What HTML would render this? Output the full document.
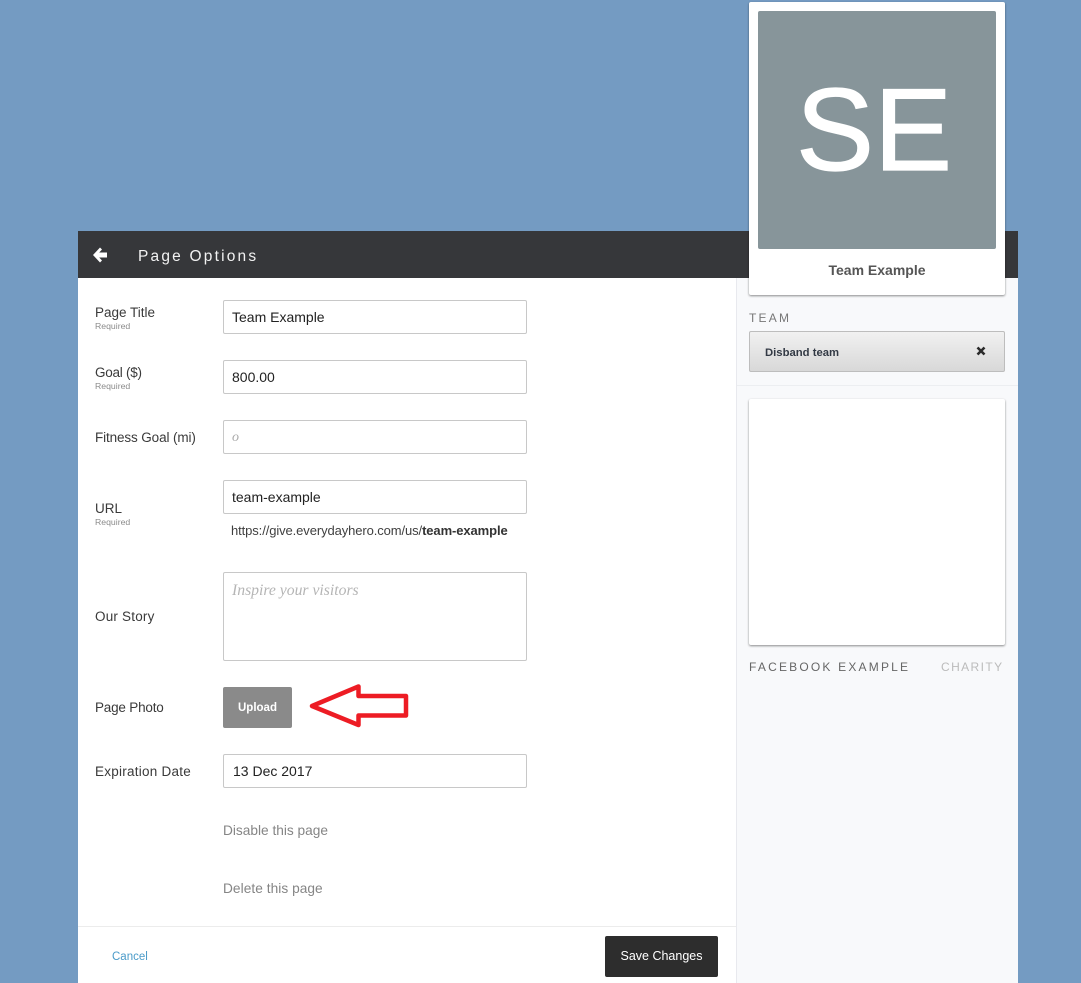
<!DOCTYPE html>
<html><head><meta charset="utf-8"><style>
html,body{margin:0;padding:0;width:1081px;height:983px;overflow:hidden;background:#749bc2;font-family:"Liberation Sans",sans-serif}
.a{position:absolute;white-space:nowrap}
.lb{left:95px;font-size:13.5px;line-height:16px;color:#3a3a3a}
.rq{left:95px;font-size:8.7px;line-height:10px;color:#8b8b8b}
.in{left:223px;width:302px;height:32px;background:#fff;border:1px solid #c8c8c8;border-radius:2px;font-size:14px;line-height:32px;color:#222;text-indent:8px}
.lk{left:223px;font-size:13.7px;line-height:16px;color:#858585}
.sec{font-size:12px;line-height:14px;letter-spacing:2.2px}
</style></head><body>
<div class="a" style="left:78px;top:231px;width:940px;height:752px;background:#fff"></div>
<div class="a" style="left:78px;top:231px;width:940px;height:47px;background:#36373a"></div>
<div class="a" style="left:736px;top:278px;width:281px;height:705px;background:#f8f9fb;border-left:1px solid #e8e9ee"></div>
<svg class="a" style="left:92px;top:247px" width="16" height="16" viewBox="0 0 16 16"><path d="M1 8 8 .5 10 2.500 7.200 5.500H15V10.500H7.200L10 13.500 8 15.500Z" fill="#fff"/></svg>
<div class="a" style="left:138px;top:247px;font-size:15.500px;line-height:19px;letter-spacing:2.200px;color:#f2f2f2">Page Options</div>

<div class="a lb" style="top:305px">Page Title</div><div class="a rq" style="top:321px">Required</div>
<div class="a in" style="top:300px">Team Example</div>
<div class="a lb" style="top:365px;letter-spacing:-.25px">Goal ($)</div><div class="a rq" style="top:381px">Required</div>
<div class="a in" style="top:360px">800.00</div>
<div class="a lb" style="top:430px;letter-spacing:-.12px">Fitness Goal (mi)</div>
<div class="a in" style="top:420px;color:#aaa;font-family:'Liberation Serif',serif;font-style:italic;line-height:34px">o</div>
<div class="a lb" style="top:501px">URL</div><div class="a rq" style="top:517px">Required</div>
<div class="a in" style="top:480px">team-example</div>
<div class="a" style="left:231px;top:523px;font-size:13px;line-height:16px;color:#3f3f3f;letter-spacing:-.1px">https://give.everydayhero.com/us/<b style="color:#333">team-example</b></div>

<div class="a lb" style="top:609px;letter-spacing:.2px">Our Story</div>
<div class="a" style="left:223px;top:572px;width:302px;height:87px;background:#fff;border:1px solid #c8c8c8;border-radius:2px"></div>
<div class="a" style="left:232px;top:582px;font-family:'Liberation Serif',serif;font-style:italic;font-size:15.700px;line-height:18px;color:#b5b5b5">Inspire your visitors</div>

<div class="a lb" style="top:700px;letter-spacing:-.2px">Page Photo</div>
<div class="a" style="left:223px;top:687px;width:69px;height:41px;background:#8a8a8a;border-radius:2px;color:#fff;font-size:11.500px;font-weight:bold;line-height:43px;text-align:center">Upload</div>
<svg class="a" style="left:300px;top:680px" width="115" height="52" viewBox="300 680 115 52"><path d="M312 706 358.500 686.500V696H406V715.500H358.500V725Z" fill="none" stroke="#ed1c24" stroke-width="4.500" stroke-linejoin="round"/></svg>

<div class="a lb" style="top:764px;letter-spacing:.25px">Expiration Date</div>
<div class="a in" style="top:754px;text-indent:9px">13 Dec 2017</div>
<div class="a lk" style="top:823px">Disable this page</div>
<div class="a lk" style="top:881px;letter-spacing:.05px">Delete this page</div>

<div class="a" style="left:78px;top:926px;width:658px;height:1px;background:#ececec"></div>
<div class="a" style="left:112px;top:950px;font-size:11.500px;line-height:14px;color:#4a9bc9">Cancel</div>
<div class="a" style="left:605px;top:936px;width:113px;height:41px;background:#2d2d2d;border-radius:2px;color:#fff;font-size:12.500px;line-height:40px;text-align:center">Save Changes</div>

<div class="a" style="left:749px;top:2px;width:256px;height:293px;background:#fff;border-radius:2px;box-shadow:0 1px 2px rgba(0,0,0,.45)"></div>
<div class="a" style="left:758px;top:11px;width:238px;height:238px;background:#87959a;border-radius:2px;overflow:hidden"></div>
<div class="a" style="left:755px;top:60px;width:238px;text-align:center;color:#fff;font-size:117px;line-height:140px;-webkit-text-stroke:1.2px #fff">SE</div>
<div class="a" style="left:749px;top:261px;width:256px;text-align:center;font-size:14px;font-weight:bold;line-height:18px;color:#555">Team Example</div>

<div class="a sec" style="left:749px;top:311px;color:#777">TEAM</div>
<div class="a" style="left:749px;top:331px;width:254px;height:39px;border:1px solid #bdbdbd;border-radius:2px;background:linear-gradient(#f1f1f1,#d8d8d8)"></div>
<div class="a" style="left:765px;top:345px;font-size:11.300px;font-weight:bold;line-height:15px;color:#333a45;padding-top:1px">Disband team</div>
<svg class="a" style="left:976px;top:346px" width="10" height="10" viewBox="0 0 10 10"><path d="M1.500 1.500 8.500 8.500M8.500 1.500 1.500 8.500" stroke="#2a2a2a" stroke-width="2.600"/></svg>
<div class="a" style="left:737px;top:385px;width:281px;height:1px;background:#eceef1"></div>

<div class="a" style="left:749px;top:399px;width:256px;height:246px;background:#fff;border-radius:2px;box-shadow:0 1px 2px rgba(0,0,0,.45)"></div>
<div class="a sec" style="left:749px;top:660px;color:#666;letter-spacing:2.200px">FACEBOOK EXAMPLE</div>
<div class="a sec" style="left:941px;top:660px;color:#bbb;letter-spacing:1.400px">CHARITY</div>
</body></html>
